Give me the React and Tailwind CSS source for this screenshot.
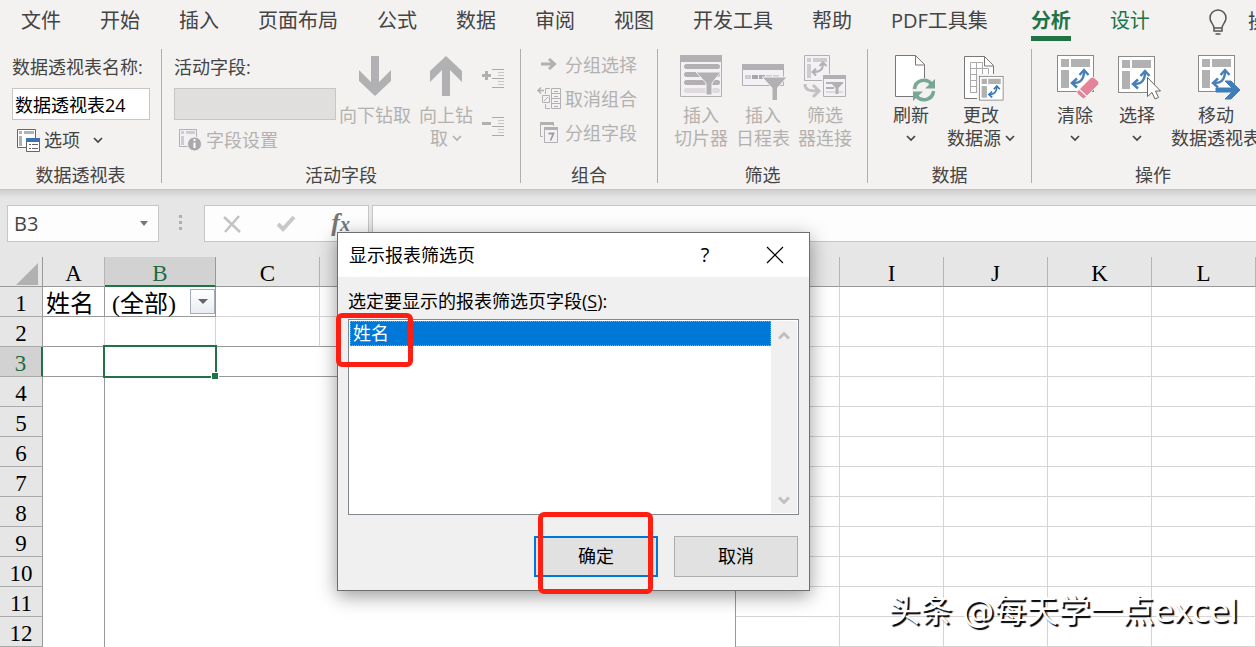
// App.jsx - Spreadsheet window with the PivotTable ribbon and the report filter dialog
import React, { useState } from 'react';

const tabs = ['文件', '开始', '插入', '页面布局', '公式', '数据', '审阅', '视图', '开发工具', '帮助', 'PDF工具集'];
const contextTabs = ['分析', '设计'];
const columns = ['A', 'B', 'C', 'D', 'E', 'F', 'G', 'H', 'I', 'J', 'K', 'L'];
const rows = [1, 2, 3, 4, 5, 6, 7, 8, 9, 10, 11, 12];

const Chevron = () => (
  <svg className="inline-block shrink-0" width="10" height="7" viewBox="0 0 10 7" fill="none" stroke="currentColor" strokeWidth="1.700" aria-hidden="true">
    <path d="M1 1l4 4 4-4" />
  </svg>
);

// Pivot table glyph, 37 units square, shared by several icons
const PivotGlyph = ({ arrow = '#4780b8', frame = '#8a8a8a', block = '#b1b1b1', fill = '#fff' }) => (
  <g>
    <rect x="0.5" y="0.5" width="36" height="36" fill={fill} stroke={frame} />
    <path d="M4 4h8v8H4zM14 4h19v8H14zM4 15h8v18H4z" fill={block} />
    <path d="M16 28c8 0 11-4 11-12" fill="none" stroke={arrow} strokeWidth="2.5" />
    <path d="M22.500 20l4.500-5 4.500 5M20 23.500L15 28l5 4.500" fill="none" stroke={arrow} strokeWidth="2.500" />
  </g>
);

const ClearIcon = () => (
  <svg width="50" height="46" viewBox="-7 -1 50 46" aria-hidden="true">
    <PivotGlyph />
    <path d="M34 22.500q1.500-1 3 0l4.500 4q1 1.500 0 3L28 43q-1.500 1.500-3 0l-4.500-4q-1.500-1.500 0-3z" fill="#e5839a" stroke="#f3f2f1" />
    <path d="M22 34l7.500 7" stroke="#f3f2f1" strokeWidth="1.300" />
  </svg>
);

const SelectIcon = () => (
  <svg width="50" height="46" viewBox="-6 -2 50 46" aria-hidden="true">
    <PivotGlyph />
    <path d="M29.500 21.500v19l4.500-4 3 6.500 3.500-1.500-3-6.500h5z" fill="#fff" stroke="#666" />
  </svg>
);

const MoveIcon = () => (
  <svg width="50" height="46" viewBox="-7 -1 50 46" aria-hidden="true">
    <PivotGlyph />
    <path d="M18 33h16l-7-7h6l9 9-9 9h-6l7-7H18z" fill="#3f7dbb" stroke="#3f7dbb" />
  </svg>
);

const RefreshIcon = () => (
  <svg width="50" height="48" viewBox="-8 0 50 48" aria-hidden="true">
    <path d="M1.500 1.500h20l9 9v32h-29z" fill="#fff" stroke="#777" />
    <path d="M21.500 1.500v9.500h9" fill="none" stroke="#777" />
    <circle cx="30" cy="36" r="12" fill="#f3f2f1" />
    <path d="M20.500 35a9.500 9.500 0 0 1 17-5M39.500 37a9.500 9.500 0 0 1-17 5" fill="none" stroke="#76a797" strokeWidth="3.500" />
    <path d="M41 25v9.500h-10zM19 47v-9.500h10z" fill="#76a797" />
  </svg>
);

const SourceIcon = () => (
  <svg width="48" height="48" viewBox="-6 0 48 48" aria-hidden="true">
    <path d="M1.500 2.500h20l9 9v33h-29z" fill="#fff" stroke="#777" />
    <path d="M21.500 2.500v9.500h9" fill="none" stroke="#777" />
    <path d="M7.500 8.500h12v30h-12zM7.500 14.500h18v24h-18M7.500 20.500h18M7.500 26.500h18M7.500 32.500h18M13.500 8.500v30M19.500 8.500v30" fill="none" stroke="#aaa" />
    <rect x="14" y="20" width="28" height="28" fill="#f3f2f1" />
    <g transform="translate(16 22) scale(0.660)">
      <PivotGlyph frame="#666" arrow="#3374b3" />
    </g>
  </svg>
);

const SlicerIcon = () => (
  <svg width="44" height="46" viewBox="-1 -1 44 46" aria-hidden="true">
    <path d="M.5.5h41v41H.5z" fill="#f4f1f6" stroke="#b3b0b3" />
    <path d="M0 0h42v7H0z" fill="#b3b0b3" />
    <path d="M6.500 11.500h31M6.500 19.500h31M6.500 27.500h31" stroke="#b3b0b3" strokeWidth="5" strokeLinecap="round" />
    <path d="M6.500 35.500h31" stroke="#dedade" strokeWidth="5" strokeLinecap="round" />
    <path d="M16 17h25L32 28v12h-6V28z" fill="#b3b0b3" stroke="#f4f1f6" />
  </svg>
);

const TimelineIcon = () => (
  <svg width="46" height="46" viewBox="-2 -1 46 46" aria-hidden="true">
    <path d="M.5 9.500h41v21H.5z" fill="#f4f1f6" stroke="#b3b0b3" />
    <path d="M0 9h42v6H0z" fill="#b3b0b3" />
    <path d="M3 20h6v4H3zM24 20h6v4h-6zM31 20h6v4h-6z" fill="#cfccd0" />
    <path d="M10 20h6v4h-6zM17 20h6v4h-6z" fill="#a9a6a9" />
    <path d="M20 22h25L35.500 33v13H30V33z" fill="#b3b0b3" stroke="#f3f2f1" />
  </svg>
);

const ConnectionIcon = () => (
  <svg width="44" height="46" viewBox="-1 -1 44 46" aria-hidden="true">
    <path d="M.5.5h25v25H.5z" fill="#f4f1f6" stroke="#b3b0b3" />
    <path d="M3 3h4v4H3zM9 3h14v4H9zM3 9h4v14H3z" fill="#cfccd0" />
    <path d="M9 17c8 0 10-3 10-9M15.500 11L19 7.500l3.500 3.500M12 13.500L8.500 17l3.500 3.500" fill="none" stroke="#b3b0b3" strokeWidth="2" />
    <path d="M18 19h25v24H18z" fill="#f3f2f1" />
    <path d="M19.500 20.500h22v21h-22z" fill="#f4f1f6" stroke="#b3b0b3" />
    <path d="M19 20h23v4H19zM22 27h17v2H22zM22 32h8v2h-8z" fill="#b3b0b3" />
    <path d="M22 36h17v2H22z" fill="#dedade" />
    <path d="M27 28h12l-4.500 5v6h-3v-6z" fill="#b3b0b3" />
    <path d="M1 29c0 6 4 7 12 7M9 30l6 6-6 6" fill="none" stroke="#c4c1c4" strokeWidth="3" />
  </svg>
);

const DrillArrow = ({ up }) => (
  <svg width="34" height="46" viewBox="0 -2 34 46" aria-hidden="true">
    {up ? (
      <path d="M17 0l16 15v11L21 14v26h-8V14L1 26V15z" fill="#b1b0b3" />
    ) : (
      <path d="M17 40L1 25V14l12 12V0h8v26l12-12v11z" fill="#b1b0b3" />
    )}
  </svg>
);

const OutlineIcon = ({ minus }) => (
  <svg width="23" height="20" viewBox="0 0 23 20" aria-hidden="true">
    <path d="M1 6.500h9" stroke="#b1b0b3" strokeWidth="3" />
    {!minus && <path d="M5.500 2v9" stroke="#b1b0b3" strokeWidth="3" />}
    <path d="M11 .5h12M11 9.500h12M11 18.500h12" stroke="#aaa" />
    <path d="M17 3.500h6M17 6.500h6M17 12.500h6M17 15.500h6" stroke="#c8c6c8" />
  </svg>
);

const OptionsIcon = () => (
  <svg width="24" height="24" viewBox="0 0 24 24" aria-hidden="true">
    <path d="M.5 1.500h18v18H.5z" fill="#fff" stroke="#666" />
    <path d="M2 3h3v3H2zM7 3h10v3H7zM2 8h3v10H2z" fill="#b1b1b1" />
    <path d="M9.500 10.500h13v13h-13z" fill="#fff" stroke="#666" />
    <path d="M9 10h14v4H9z" fill="#3c72b4" />
    <path d="M12 16.500h2M12 20.500h2M15 16.500h6M15 20.500h6" stroke="#666" />
  </svg>
);

const FieldSettingsIcon = () => (
  <svg width="24" height="24" viewBox="0 0 24 24" aria-hidden="true">
    <path d="M.5 1.500h17v17H.5z" fill="#f4f1f6" stroke="#b1b0b3" />
    <path d="M2 3h3v3H2zM7 3h9v3H7zM2 8h3v9H2z" fill="#cfccd0" />
    <circle cx="15.500" cy="16" r="7" fill="#aaa8aa" stroke="#f3f2f1" />
    <path d="M15.500 11v2M15.500 14.500v5.500" stroke="#fff" strokeWidth="2" />
  </svg>
);

const GroupIcon = ({ kind }) => (
  <svg width="25" height="24" viewBox="0 0 25 24" aria-hidden="true">
    {kind === 'select' && (
      <path d="M4 11h13M12 6l5.500 5-5.500 5" fill="none" stroke="#b1b0b3" strokeWidth="3" />
    )}
    {kind === 'ungroup' && (
      <g fill="none" stroke="#b1b0b3">
        <path d="M7 3.500H1M4 .5l-3 3 3 3" strokeWidth="1.500" />
        <path d="M13 1.500H8.500V7M8.500 17v4.500H13M5.500 8.500h7v7h-7zM7 14l4-4" />
        <path d="M14.500 1.500h9v20h-9zM14.500 6.500h9M14.500 11.500h9M14.500 16.500h9M17 4.500h4M17 9.500h4M17 14.500h4M17 19.500h4" />
      </g>
    )}
    {kind === 'field' && (
      <g>
        <path d="M3.500 1.500h13v14h-13z" fill="#f4f1f6" stroke="#b1b0b3" />
        <path d="M3 1h14v3H3z" fill="#b1b0b3" />
        <path d="M6 5h14v17H6z" fill="#f3f2f1" />
        <path d="M7.500 6.500h13v15h-13z" fill="#f4f1f6" stroke="#b1b0b3" />
        <path d="M7 6h14v3H7z" fill="#b1b0b3" />
        <path d="M11.500 12.500h5l-3 7" fill="none" stroke="#a09ea0" strokeWidth="1.800" />
      </g>
    )}
  </svg>
);

const RibbonGroup = ({ label, className, labelClass = 'text-center', children }) => (
  <section className={`flex shrink-0 flex-col border-r border-[#b1b0af] ${className}`} aria-label={label}>
    <div className="flex flex-1">{children}</div>
    <div className={`leading-4 ${labelClass}`}>{label}</div>
  </section>
);

const BigButton = ({ icon, lines, className = 'w-[62px]', disabled, menu }) => (
  <button
    type="button"
    disabled={disabled}
    className={`flex shrink-0 flex-col items-center self-start whitespace-nowrap pt-[5px] leading-[23px] disabled:text-[#b3b1af] ${className}`}
  >
    <span className="flex h-[50px] items-start justify-center">{icon}</span>
    <span>{lines[0]}</span>
    <span className="flex h-[23px] items-center gap-1">
      {lines[1]}
      {menu && <Chevron />}
    </span>
  </button>
);

const Ribbon = () => (
  <div className="flex h-[145px] overflow-hidden border-b border-[#c8c6c4] pt-1 pb-1.5 text-[18px]">
    <RibbonGroup label="数据透视表" className="w-[162px]">
      <div className="flex flex-col px-3 pt-1.5">
        <label htmlFor="pivot-name" className="leading-6 whitespace-nowrap">数据透视表名称:</label>
        <input
          id="pivot-name"
          defaultValue="数据透视表24"
          className="mt-[9px] h-8 w-[138px] border border-[#c6c6c6] bg-white px-0.5 text-black"
        />
        <button type="button" className="mt-2 flex items-center gap-[3px] pl-[5px] leading-6">
          <OptionsIcon />
          选项
          <span className="ml-2.5 flex"><Chevron /></span>
        </button>
      </div>
    </RibbonGroup>

    <RibbonGroup label="活动字段" className="w-[359px]">
      <div className="flex flex-col pl-3 pt-1.5">
        <label htmlFor="active-field" className="leading-6">活动字段:</label>
        <input id="active-field" disabled className="mt-[9px] h-8 w-[162px] border border-[#c6c6c6] bg-[#e1dfdd]" />
        <button type="button" disabled className="mt-2 flex items-center gap-[3px] pl-[5px] leading-6 text-[#b3b1af]">
          <FieldSettingsIcon />
          字段设置
        </button>
      </div>
      <BigButton disabled icon={<DrillArrow />} lines={['向下钻取', '']} className="ml-[3px] w-[72px]" />
      <BigButton disabled menu icon={<DrillArrow up />} lines={['向上钻', '取']} className="w-[70px]" />
      <div className="flex flex-col gap-7 pt-5">
        <button type="button" disabled aria-label="展开字段"><OutlineIcon /></button>
        <button type="button" disabled aria-label="折叠字段"><OutlineIcon minus /></button>
      </div>
    </RibbonGroup>

    <RibbonGroup label="组合" className="w-[137px]">
      <div className="flex flex-col gap-2.5 pl-4 pt-1 text-[#b3b1af]">
        {[['select', '分组选择'], ['ungroup', '取消组合'], ['field', '分组字段']].map(([kind, text]) => (
          <button key={kind} type="button" disabled className="flex items-center gap-[3px] leading-6">
            <GroupIcon kind={kind} />
            {text}
          </button>
        ))}
      </div>
    </RibbonGroup>

    <RibbonGroup label="筛选" className="w-[210px]">
      <div className="flex pl-3">
        <BigButton disabled icon={<SlicerIcon />} lines={['插入', '切片器']} />
        <BigButton disabled icon={<TimelineIcon />} lines={['插入', '日程表']} />
        <BigButton disabled icon={<ConnectionIcon />} lines={['筛选', '器连接']} />
      </div>
    </RibbonGroup>

    <RibbonGroup label="数据" className="w-[164px]">
      <div className="flex pl-3">
        <BigButton menu icon={<RefreshIcon />} lines={['刷新', '']} />
        <BigButton menu icon={<SourceIcon />} lines={['更改', '数据源']} className="w-[78px]" />
      </div>
    </RibbonGroup>

    <RibbonGroup label="操作" className="grow border-r-0" labelClass="pl-[103px]">
      <div className="flex pl-3">
        <BigButton menu icon={<ClearIcon />} lines={['清除', '']} />
        <BigButton menu icon={<SelectIcon />} lines={['选择', '']} />
        <BigButton icon={<MoveIcon />} lines={['移动', '数据透视表']} className="w-24" />
      </div>
    </RibbonGroup>
  </div>
);

const FormulaBar = () => (
  <div className="flex h-[67px] items-start bg-linear-to-b from-[#cfcfcf] to-[#e6e6e6] to-12% pt-[15px] pl-[7px]">
    <div className="flex h-[37px] w-[152px] shrink-0 items-center border border-[#c6c6c6] bg-[#fdfdfd]">
      <input aria-label="名称框" defaultValue="B3" className="w-full min-w-0 px-1.5 text-[20px] text-[#444]" />
      <svg className="mr-2.5 shrink-0" width="8" height="5" aria-hidden="true"><path d="M0 0h8L4 5z" fill="#777" /></svg>
    </div>
    <svg className="mr-[21px] ml-[19px] mt-2 shrink-0" width="5" height="19" aria-hidden="true">
      <path d="M1 2h3v3H1zM1 8h3v3H1zM1 14h3v3H1z" fill="#b0b0b0" />
    </svg>
    <div className="flex h-[37px] w-[165px] shrink-0 items-center justify-between border border-[#c6c6c6] bg-[#fdfdfd] pr-[18px] pl-[18px]">
      <button type="button" aria-label="取消">
        <svg width="18" height="18" fill="none" stroke="#c3c3c3" strokeWidth="2.500"><path d="M1 2l16 15M16 1L2 17" /></svg>
      </button>
      <button type="button" aria-label="输入">
        <svg width="20" height="18" fill="none" stroke="#c8c8c8" strokeWidth="4"><path d="M2 9l5 5L18 2" /></svg>
      </button>
      <button type="button" aria-label="插入函数" className="font-['Liberation_Serif',serif] text-[26px] leading-8 font-bold text-[#777] italic">
        f<span className="text-[20px]">x</span>
      </button>
    </div>
    <input aria-label="编辑栏" className="ml-[3px] h-[37px] min-w-0 flex-1 border border-r-0 border-[#c6c6c6] bg-[#fdfdfd] px-2" />
  </div>
);

// Grid lines turn dark around the pivot area, which spans A to G from row 3 down
const cellBorder = (row, col) => {
  if (row === 1) return col < 2 ? 'border-r border-b border-[#999]' : 'border-r border-b border-[#d4d4d4]';
  if (row === 2) return col < 7 ? 'border-r border-b border-r-[#d4d4d4] border-b-[#999]' : 'border-r border-b border-[#d4d4d4]';
  if (col > 6) return 'border-r border-b border-[#d4d4d4]';
  const right = col === 0 || col === 6 ? 'border-r border-r-[#999]' : '';
  const bottom = row === 3 ? 'border-b border-b-[#999]' : '';
  return `${right} ${bottom}`;
};

const Sheet = () => (
  <table className="w-full table-fixed border-separate border-spacing-0 bg-white font-['Liberation_Serif','Noto_Sans_CJK_SC',serif] text-[23px] leading-6 text-black">
    <colgroup>
      <col className="w-[43px]" />
      <col className="w-[62px]" />
      <col className="w-[111px]" />
      {columns.slice(2, 11).map((c) => <col key={c} className="w-[104px]" />)}
      <col />
    </colgroup>
    <thead>
      <tr className="h-[30px] bg-[#e6e6e6]">
        <th className="border-r border-b border-[#999] p-0" aria-label="全选">
          <svg className="mt-1 ml-auto mr-1" width="22" height="22" aria-hidden="true"><path d="M22 0v22H0z" fill="#b1b1b1" /></svg>
        </th>
        {columns.map((c) => (
          <th
            key={c}
            className={`border-r p-0 font-normal ${c === 'B' ? 'border-b-2 border-r-[#999] border-b-[#217346] bg-[#d2d2d2] pt-[5px] leading-[23px] text-[#1e6b41]' : 'border-b border-r-[#b4b4b4] border-b-[#999] pt-[5px]'}`}
          >
            {c}
          </th>
        ))}
      </tr>
    </thead>
    <tbody>
      {rows.map((row) => (
        <tr key={row} className="h-[30px]">
          <th
            className={`border-b border-b-[#aaa] p-0 pt-[5px] font-normal ${row === 3 ? 'border-r-2 border-r-[#217346] bg-[#d2d2d2] text-[#1e6b41]' : 'border-r border-r-[#999] bg-[#e6e6e6]'}`}
          >
            {row}
          </th>
          {columns.map((c, col) => (
            <td key={c} className={`relative p-0 ${cellBorder(row, col)}`}>
              {row === 1 && c === 'A' && <div className="pt-1 pl-[3px] text-[24px] leading-6 whitespace-nowrap">姓名</div>}
              {row === 1 && c === 'B' && (
                <div className="flex items-center justify-between pl-[7px]">
                  <span className="pt-1 text-[24px] leading-6 whitespace-nowrap">(全部)</span>
                  <button type="button" aria-label="筛选" className="flex size-[25px] items-center justify-center border border-[#a5adb8] bg-linear-to-b from-white to-[#e9edf3]">
                    <svg width="10" height="5" aria-hidden="true"><path d="M0 0h10L5 5z" fill="#666" /></svg>
                  </button>
                </div>
              )}
              {row === 3 && c === 'B' && (
                <div className="absolute -top-0.5 -right-px -bottom-0.5 -left-0.5 z-10 border-2 border-[#217346]">
                  <span className="absolute -right-1 -bottom-1 size-2 border border-white bg-[#217346]" />
                </div>
              )}
            </td>
          ))}
        </tr>
      ))}
    </tbody>
  </table>
);

const FilterDialog = () => (
  <div
    role="dialog"
    aria-labelledby="dialog-title"
    className="absolute top-[232px] left-[337px] z-20 w-[473px] border border-[#6e6e6e] bg-[#f0f0f0] text-[18px] text-black shadow-[0_5px_18px_rgba(0,0,0,0.4)]"
  >
    <div className="flex h-11 items-center bg-white pr-6 pl-[11px]">
      <h2 id="dialog-title" className="flex-1">显示报表筛选页</h2>
      <button type="button" aria-label="帮助" className="w-6 text-[20px]">?</button>
      <button type="button" aria-label="关闭" className="ml-12">
        <svg width="20" height="20" stroke="#000" strokeWidth="1.200" aria-hidden="true"><path d="M2 2l16 16M18 2L2 18" /></svg>
      </button>
    </div>
    <div className="px-2.5 pt-3 pb-[13px]">
      <div id="field-label" className="leading-6">选定要显示的报表筛选页字段(<u className="underline-offset-2">S</u>):</div>
      <div className="mt-1.5 flex h-[196px] border border-[#828790] bg-white p-px">
        <ul role="listbox" aria-labelledby="field-label" className="flex-1">
          <li role="option" aria-selected="true" className="h-[25px] border border-dotted border-[#ff8a28] bg-[#0078d7] px-0.5 leading-[23px] text-white">
            姓名
          </li>
        </ul>
        <div className="flex w-[26px] flex-col items-center justify-between bg-[#f0f0f0] pt-2.5 pb-2">
          <svg width="12" height="9" fill="none" stroke="#bfbfbf" strokeWidth="3" aria-hidden="true"><path d="M1 7.500l5-5 5 5" /></svg>
          <svg width="12" height="9" fill="none" stroke="#bfbfbf" strokeWidth="3" aria-hidden="true"><path d="M1 1.500l5 5 5-5" /></svg>
        </div>
      </div>
      <div className="mt-[21px] flex justify-end gap-4 pr-px">
        <button type="button" className="h-[41px] w-[124px] border-2 border-[#0078d7] bg-[#e1e1e1]">确定</button>
        <button type="button" className="h-[41px] w-[124px] border border-[#adadad] bg-[#e1e1e1]">取消</button>
      </div>
    </div>
    {/* Highlight frames around the selected field and the OK button */}
    <div className="absolute top-[80px] -left-0.5 h-[54px] w-[77px] rounded-md border-5 border-[#ff1e12]" />
    <div className="absolute top-[279px] left-[200px] h-[82px] w-[115px] rounded-md border-5 border-[#ff1e12]" />
  </div>
);

const Tab = ({ name, active, contextual, onSelect }) => (
  <button
    type="button"
    onClick={() => onSelect(name)}
    className={`h-[41px] shrink-0 border-b-5 pt-1.5 leading-[30px] ${active ? 'border-[#217346] font-bold' : 'border-transparent'} ${contextual ? 'text-[#217346]' : ''}`}
  >
    {name}
  </button>
);

const App = () => {
  const [activeTab, setActiveTab] = useState('分析');

  return (
    <div className="relative min-h-screen w-full overflow-hidden bg-[#f3f2f1] font-['Open_Sans','Noto_Sans_CJK_SC',sans-serif] text-[#444]">
      <nav className="flex h-[45px] gap-[39px] overflow-hidden pl-[21px] text-[20px] whitespace-nowrap">
        {tabs.map((tab) => (
          <Tab key={tab} name={tab} active={tab === activeTab} onSelect={setActiveTab} />
        ))}
        <div className="ml-1 flex shrink-0 gap-[39px]">
          {contextTabs.map((tab) => (
            <Tab key={tab} name={tab} active={tab === activeTab} contextual onSelect={setActiveTab} />
          ))}
        </div>
        <button type="button" className="ml-[19px] flex h-[43px] shrink-0 items-center gap-5">
          <svg width="20" height="26" viewBox="0 0 20 26" fill="none" stroke="#555" strokeWidth="1.500" aria-hidden="true">
            <path d="M6 19c0-4-4-5-4-10a8 8 0 0 1 16 0c0 5-4 6-4 10zM6 19v3h8v-3M7.500 25h5" />
          </svg>
          操作说明搜索
        </button>
      </nav>
      <Ribbon />
      <FormulaBar />
      <Sheet />
      <FilterDialog />
      <div className="absolute right-[18px] bottom-4 z-10 font-['DejaVu_Sans','Noto_Sans_CJK_SC',sans-serif] text-[32px] leading-10 whitespace-nowrap text-white [text-shadow:2px_2px_1px_#000]">
        头条 @每天学一点excel
      </div>
    </div>
  );
};

export default App;
